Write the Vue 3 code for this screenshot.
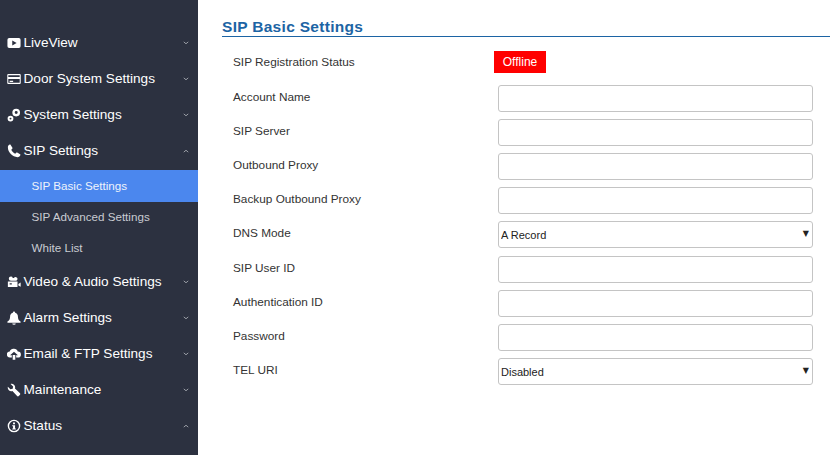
<template>
  <div class="page">
    <aside class="sidebar">
      <template v-for="item in menu" :key="item.label">
        <div class="menu-item">
          <svg class="icon" viewBox="0 0 16 16" v-html="item.icon"></svg>
          <span class="menu-label">{{ item.label }}</span>
          <svg class="chev" viewBox="0 0 8 5">
            <path :d="item.open ? 'M1 4 L4 1.5 L7 4' : 'M1 1 L4 3.5 L7 1'" />
          </svg>
        </div>
        <div v-if="item.children" class="sub-menu">
          <div
            v-for="child in item.children"
            :key="child.label"
            class="sub-item"
            :class="{ active: child.active }"
          >
            {{ child.label }}
          </div>
        </div>
      </template>
    </aside>

    <main class="content">
      <h1 class="title">SIP Basic Settings</h1>
      <div class="form">
        <div class="row status-row">
          <label>SIP Registration Status</label>
          <span class="status">Offline</span>
        </div>
        <div v-for="f in fields" :key="f.label" class="row">
          <label>{{ f.label }}</label>
          <div v-if="f.options" class="select-wrap">
            <select>
              <option v-for="o in f.options" :key="o">{{ o }}</option>
            </select>
            <span class="arrow">▼</span>
          </div>
          <input v-else type="text" />
        </div>
      </div>
    </main>
  </div>
</template>

<script setup>
const menu = [
  {
    label: 'LiveView',
    icon: '<path d="M2.500 2.200h11a2 2 0 0 1 2 2v7.600a2 2 0 0 1-2 2h-11a2 2 0 0 1-2-2V4.200a2 2 0 0 1 2-2zM6 5.200v5.600L11 8z" fill-rule="evenodd"/>',
  },
  {
    label: 'Door System Settings',
    icon: '<path d="M1.500 2.200h13a1.200 1.200 0 0 1 1.200 1.200v9.200a1.200 1.200 0 0 1-1.200 1.200h-13a1.200 1.200 0 0 1-1.200-1.200V3.400a1.200 1.200 0 0 1 1.200-1.200zM1.500 3.600v2h13v-2zM1.500 8v4.400h13V8zM3 10h4v1.300H3z" fill-rule="evenodd"/>',
  },
  {
    label: 'System Settings',
    icon: '<path d="M10.500.8a4.400 4.400 0 1 1 0 8.800 4.400 4.400 0 0 1 0-8.800zm0 2.700a1.700 1.700 0 1 0 0 3.400 1.700 1.700 0 0 0 0-3.400zM4 8.800a3.300 3.300 0 1 1 0 6.600 3.300 3.300 0 0 1 0-6.600zm0 2.200a1.100 1.100 0 1 0 0 2.200 1.100 1.100 0 0 0 0-2.200z" fill-rule="evenodd"/>',
  },
  {
    label: 'SIP Settings',
    open: true,
    icon: '<path d="M4.200 1l2 3.400c.2.400.1.800-.2 1.100L4.900 6.600c.8 1.900 2.500 3.600 4.500 4.500l1.100-1.100c.3-.3.700-.4 1.100-.2l3.400 2c.3.200.4.500.3.800-.4 1.500-1.700 2.400-3.200 2.400C6.300 15 1 9.700 1 3.800 1 2.300 1.900 1 3.400.7c.3-.1.600 0 .8.300z"/>',
    children: [
      { label: 'SIP Basic Settings', active: true },
      { label: 'SIP Advanced Settings' },
      { label: 'White List' },
    ],
  },
  {
    label: 'Video & Audio Settings',
    icon: '<path d="M4.500 1.800a2.200 2.200 0 0 1 2.100 1.600h1.300a2.200 2.200 0 1 1 1.800 3.300H4.500a2.450 2.450 0 0 1 0-4.900zM1 7.500h11v6.300H1zM13 10.200l2.600-1.500v4.800L13 12zM3 9.300v1.500h2.500V9.300z" fill-rule="evenodd"/>',
  },
  {
    label: 'Alarm Settings',
    icon: '<path d="M8 .6a1.300 1.300 0 0 1 1.300 1.400c2.100.5 3.200 2.300 3.200 4.500 0 2.800 1 4.200 3 5.500v1.300H.5V12c2-1.300 3-2.700 3-5.500 0-2.200 1.100-4 3.200-4.500A1.300 1.300 0 0 1 8 .6zM6 14.200h4a2 1.500 0 0 1-4 0z"/>',
  },
  {
    label: 'Email & FTP Settings',
    icon: '<path d="M8 2a4.500 4.500 0 0 1 4.300 3.200 3.400 3.400 0 0 1 .3 6.800h-2.100V9.500h2L8 5.500l-4.500 4h2V12H3.400a3.400 3.400 0 0 1-.3-6.800A4.700 4.700 0 0 1 8 2zM6.500 9h3v5.500h-3z"/>',
  },
  {
    label: 'Maintenance',
    icon: '<path d="M1 4.300c-.4 1.500 0 3 1.100 4 1.100 1.100 2.700 1.400 4.100.9l5.100 5.500a1.600 1.600 0 0 0 2.400 0l.9-.9a1.600 1.600 0 0 0 0-2.300L9.100 6.300c.5-1.400.2-3-.9-4.100C7.100 1.100 5.600.7 4.100 1.100L7 4l-.5 2.600-2.600.5z"/>',
  },
  {
    label: 'Status',
    open: true,
    icon: '<path d="M8 .8a7.200 7.200 0 1 1 0 14.400A7.200 7.200 0 0 1 8 .8zm0 1.600a5.600 5.600 0 1 0 0 11.200A5.600 5.600 0 0 0 8 2.400zM6.900 4h2.200v2H6.900zM6 7h3.200v3.900h.9v1.200H6v-1.200h.9V8.200H6z" fill-rule="evenodd"/>',
  },
]

const fields = [
  { label: 'Account Name' },
  { label: 'SIP Server' },
  { label: 'Outbound Proxy' },
  { label: 'Backup Outbound Proxy' },
  { label: 'DNS Mode', options: ['A Record', 'SRV', 'NAPTR/SRV'] },
  { label: 'SIP User ID' },
  { label: 'Authentication ID' },
  { label: 'Password' },
  { label: 'TEL URI', options: ['Disabled', 'User=Phone', 'Enabled'] },
]
</script>

<style>
html,
body {
  margin: 0;
  background: #fff;
}
</style>

<style scoped>
.page {
  display: flex;
  width: 830px;
  height: 455px;
  overflow: hidden;
  font-family: 'Liberation Sans', Arial, sans-serif;
}
.sidebar {
  width: 198px;
  flex: none;
  box-sizing: border-box;
  padding-top: 25px;
  background: #2c3140;
}
.menu-item {
  display: flex;
  align-items: center;
  height: 36px;
  padding-left: 7px;
  color: #fff;
  font-size: 13.6px;
}
.icon {
  width: 14px;
  height: 14px;
  margin-right: 2.5px;
  fill: #fff;
  flex: none;
}
.menu-label {
  flex: 1;
  padding-bottom: 1px;
}
.chev {
  width: 6px;
  height: 4px;
  margin-right: 9px;
  fill: none;
  stroke: #a5a8b0;
  stroke-width: 1.2;
}
.sub-menu {
  padding-top: 1px;
}
.sub-item {
  display: flex;
  align-items: center;
  box-sizing: border-box;
  height: 31px;
  padding: 0 0 2px 31.5px;
  color: #c9ccd2;
  font-size: 11.65px;
}
.sub-item.active {
  height: 32px;
  background: #4b87ee;
  color: #eef3fb;
}
.content {
  flex: 1;
  min-width: 0;
  padding: 17px 0 0 24px;
}
.title {
  margin: 0;
  height: 19px;
  border-bottom: 1px solid #1c64a4;
  color: #1c64a4;
  font-size: 15.5px;
  line-height: 19px;
  font-weight: 700;
  letter-spacing: 0.3px;
}
.form {
  display: flex;
  flex-direction: column;
  padding: 14px 17px 0 11px;
  gap: 7.1px;
}
.row {
  display: flex;
  align-items: center;
  height: 27px;
}
.status-row {
  align-items: flex-start;
}
.row label {
  width: 265px;
  flex: none;
  box-sizing: border-box;
  padding-bottom: 3px;
  color: #333;
  font-size: 11.8px;
}
.status-row label {
  padding-bottom: 0;
  line-height: 22px;
}
.status {
  display: flex;
  align-items: center;
  justify-content: center;
  box-sizing: border-box;
  width: 52px;
  height: 22px;
  margin-left: -4px;
  background: #f00;
  color: #fff;
  font-size: 12px;
}
.row input,
.row select {
  display: block;
  box-sizing: border-box;
  width: 315px;
  height: 27px;
  margin: 0;
  background: #fff;
  border: 1px solid #c4c4c4;
  border-radius: 3px;
  outline: none;
}
.row select {
  padding: 1px 0 0 2px;
  appearance: none;
  color: #222;
  font-family: 'Liberation Sans', Arial, sans-serif;
  font-size: 11px;
}
.select-wrap {
  position: relative;
  width: 315px;
}
.arrow {
  position: absolute;
  top: 8px;
  right: 4px;
  color: #222;
  font-family: 'DejaVu Sans', sans-serif;
  font-size: 8px;
  pointer-events: none;
}
</style>
